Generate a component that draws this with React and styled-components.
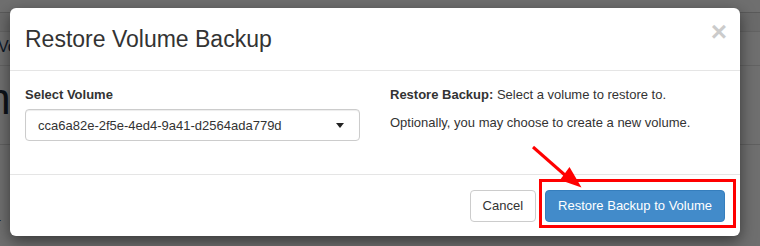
import React from 'react';
import styled, { createGlobalStyle } from 'styled-components';

const GlobalStyle = createGlobalStyle`
  html, body { margin: 0; padding: 0; }
  body {
    font-family: "Liberation Sans", Arial, Helvetica, sans-serif;
    font-size: 13px;
    color: #333;
    background: #fff;
  }
  * { box-sizing: border-box; }
`;

const Page = styled.div`
  position: relative;
  width: 760px;
  height: 246px;
  overflow: hidden;
  background: #fff;
`;

const TopBar = styled.div`
  height: 13px;
  background: #fff;
  border-bottom: 1px solid #cfcfcf;
`;

const SubBar = styled.div`
  height: 19px;
  background: #f3f3f3;
  border-bottom: 1px solid #e4e4e4;
`;

const Crumb = styled.div`
  height: 34px;
  padding-top: 6px;
  font-size: 16px;
  color: #1f3d5c;
  border-bottom: 1px solid #e4e4e4;
  text-indent: -2px;
`;

const PageTitle = styled.div`
  height: 79px;
  font-size: 44px;
  line-height: 66px;
  color: #1d2b3a;
  text-indent: -26px;
  border-bottom: 1px solid #dcdcdc;
`;

const TableRow = styled.div`
  padding-top: 64px;
  font-size: 13px;
  color: #333;
  text-indent: -6px;
`;

const Overlay = styled.div`
  position: absolute;
  inset: 0;
  background: rgba(0, 0, 0, 0.565);
`;

const Modal = styled.div`
  position: absolute;
  left: 10px;
  top: 8px;
  width: 730px;
  background: #fff;
  border-radius: 6px;
  box-shadow: 0 5px 15px rgba(0, 0, 0, 0.5);
`;

const Header = styled.div`
  position: relative;
  padding: 15px;
  border-bottom: 1px solid #e5e5e5;
`;

const Title = styled.h3`
  margin: 0;
  font-size: 23px;
  font-weight: 400;
  line-height: 32px;
  color: #333;
`;

const Close = styled.button`
  position: absolute;
  right: 13px;
  top: 10px;
  padding: 0;
  border: 0;
  background: transparent;
  font-family: "Liberation Sans", Arial, sans-serif;
  font-size: 28px;
  font-weight: 700;
  line-height: 1;
  color: #000;
  opacity: 0.2;
  cursor: pointer;
`;

const Body = styled.div`
  padding: 15px;
  display: grid;
  grid-template-columns: 335px 335px;
  column-gap: 30px;
`;

const FormGroup = styled.div`
  margin-bottom: 18px;
`;

const Label = styled.label`
  display: block;
  font-weight: 700;
  line-height: 18px;
  margin-bottom: 5px;
`;

const Select = styled.div`
  display: flex;
  align-items: center;
  justify-content: space-between;
  height: 32px;
  padding: 0 12px;
  border: 1px solid #ccc;
  border-radius: 4px;
  box-shadow: inset 0 1px 1px rgba(0, 0, 0, 0.075);
  color: #333;
`;

const Caret = styled.span`
  width: 0;
  height: 0;
  margin-right: 3px;
  border-left: 4.5px solid transparent;
  border-right: 4.5px solid transparent;
  border-top: 5px solid #222;
`;

const Para = styled.p`
  margin: 0 0 10px;
  line-height: 18px;
  &:last-child { margin-top: 8px; }
`;

const Footer = styled.div`
  position: relative;
  display: flex;
  justify-content: flex-end;
  gap: 9px;
  padding: 15px 15px 14px;
  border-top: 1px solid #e5e5e5;
`;

const Button = styled.button`
  height: 32px;
  padding: 6px 12px;
  font-family: "Liberation Sans", Arial, sans-serif;
  font-size: 13px;
  line-height: 18px;
  border-radius: 4px;
  border: 1px solid ${(p) => (p.$primary ? '#357ebd' : '#ccc')};
  background: ${(p) => (p.$primary ? '#428bca' : '#fff')};
  color: ${(p) => (p.$primary ? '#fff' : '#333')};
  cursor: pointer;
`;

const Highlight = styled.div`
  position: absolute;
  left: 529px;
  top: 4px;
  width: 197px;
  height: 49px;
  border: 3px solid #ff0000;
  pointer-events: none;
`;

const Arrow = styled.svg`
  position: absolute;
  left: 0;
  top: 0;
  pointer-events: none;
`;

export default function App() {
  return (
    <>
      <GlobalStyle />
      <Page>
        <TopBar />
        <SubBar />
        <Crumb>Vo</Crumb>
        <PageTitle>m</PageTitle>
        <TableRow>1</TableRow>
        <Overlay />
        <Modal>
          <Header>
            <Title>Restore Volume Backup</Title>
            <Close aria-label="Close">×</Close>
          </Header>
          <Body>
            <FormGroup>
              <Label>Select Volume</Label>
              <Select>
                <span>cca6a82e-2f5e-4ed4-9a41-d2564ada779d</span>
                <Caret />
              </Select>
            </FormGroup>
            <div>
              <Para>
                <b>Restore Backup:</b> Select a volume to restore to.
              </Para>
              <Para>Optionally, you may choose to create a new volume.</Para>
            </div>
          </Body>
          <Footer>
            <Button>Cancel</Button>
            <Button $primary>Restore Backup to Volume</Button>
            <Highlight />
          </Footer>
        </Modal>
        <Arrow width="760" height="246" viewBox="0 0 760 246">
          <line x1="533" y1="147" x2="566" y2="176" stroke="#ff0000" strokeWidth="3" />
          <polygon points="581.5,187.5 569.5,167 560,180" fill="#ff0000" />
        </Arrow>
      </Page>
    </>
  );
}
